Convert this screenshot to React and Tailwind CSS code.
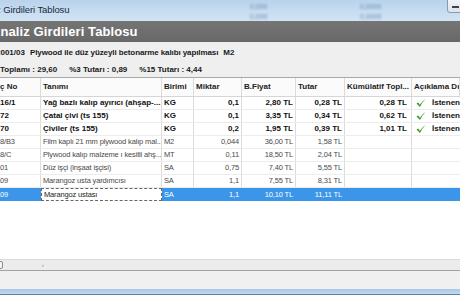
import React from 'react'

const cols = ['w-[41px]', 'w-[121px]', 'w-[32px]', 'w-[48px]', 'w-[54px]', 'w-[49px]', 'w-[67px]', 'flex-1']

const rows = [
  { no: '16/1', name: 'Yağ bazlı kalıp ayırıcı (ahşap-...', unit: 'KG', qty: '0,1', price: '2,80 TL', total: '0,28 TL', cum: '0,28 TL', bold: true, ok: true },
  { no: '72', name: 'Çatal çivi (ts 155)', unit: 'KG', qty: '0,1', price: '3,35 TL', total: '0,34 TL', cum: '0,62 TL', bold: true, ok: true },
  { no: '70', name: 'Çiviler (ts 155)', unit: 'KG', qty: '0,2', price: '1,95 TL', total: '0,39 TL', cum: '1,01 TL', bold: true, ok: true },
  { no: '8/B3', name: 'Film kaplı 21 mm plywood kalıp mal...', unit: 'M2', qty: '0,044', price: '36,00 TL', total: '1,58 TL' },
  { no: '8/C', name: 'Plywood kalıp malzeme ı kesitli ahş...', unit: 'MT', qty: '0,11', price: '18,50 TL', total: '2,04 TL' },
  { no: '01', name: 'Düz işçi (inşaat işçisi)', unit: 'SA', qty: '0,75', price: '7,40 TL', total: '5,55 TL' },
  { no: '09', name: 'Marangoz usta yardımcısı', unit: 'SA', qty: '1,1', price: '7,55 TL', total: '8,31 TL' },
  { no: '09', name: 'Marangoz ustası', unit: 'SA', qty: '1,1', price: '10,10 TL', total: '11,11 TL', selected: true },
]

function Check() {
  return (
    <svg width="11" height="10" viewBox="0 0 11 10">
      <path d="M0.5 5.5 L2.5 4.5 L4.2 7 Q7 2.5 10.5 0.5 Q6.8 4 4.4 9.5 Z" fill="#3f9b2c" />
    </svg>
  )
}

export default function App() {
  return (
    <div className="w-[460px] h-[295px] overflow-hidden bg-white flex flex-col font-['Liberation_Sans',Arial,sans-serif]">
      {/* title bar */}
      <div className="relative h-[21px] bg-gradient-to-b from-[#b9d3ec] to-[#d2e4f4] flex items-center overflow-hidden">
        <span className="ml-[-4px] text-[9.5px] text-[#1b2a3a] tracking-[-0.1px] whitespace-nowrap">z Girdileri Tablosu</span>
        <div className="absolute left-[250px] top-[2px] text-[7px] text-[#6f90b5] blur-[1px] leading-[10px]">
          <div>0,000</div>
          <div>0,000</div>
        </div>
        <div className="absolute left-[360px] top-[2px] text-[7px] text-[#6f90b5] blur-[1px] leading-[10px]">
          <div>0,0000</div>
          <div>0,0000</div>
        </div>
        <div className="absolute left-[447px] top-[-3px] w-[20px] h-[16px] rounded-[3px] border border-[#8a9aab] bg-gradient-to-b from-[#f4f7fa] to-[#dbe3ec] flex items-center pl-[4px]">
          <div className="w-[7px] h-[2px] bg-[#444] mt-[3px]" />
        </div>
      </div>

      {/* heading band */}
      <div className="h-[21px] bg-gradient-to-b from-[#757575] to-[#686868] flex items-center overflow-hidden">
        <span className="ml-[-9px] text-white font-bold text-[13px] tracking-[0.1px] whitespace-nowrap">Analiz Girdileri Tablosu</span>
      </div>

      {/* info */}
      <div className="h-[36px] bg-[#efefef] border-b border-[#a9a9a9] flex flex-col text-[8px] font-bold text-[#1a1a1a] whitespace-nowrap">
        <div className="mt-[5px] h-[12px] flex items-center ml-[-4px] gap-[5px]">
          <span>2001/03</span>
          <span className="tracking-[-0.1px]">Plywood ile düz yüzeyli betonarme kalıbı yapılması</span>
          <span>M2</span>
        </div>
        <div className="mt-[5px] h-[12px] flex items-center gap-[12px]">
          <span>Toplamı : 29,60</span>
          <span>%3 Tutarı : 0,89</span>
          <span>%15 Tutarı : 4,44</span>
        </div>
      </div>

      {/* header */}
      <div className="h-[19px] flex bg-[#fbfbfb] border-b border-[#d6d6d6] text-[8px] font-bold text-[#222] whitespace-nowrap">
        {['ç No', 'Tanımı', 'Birimi', 'Miktar', 'B.Fiyat', 'Tutar', 'Kümülatif Topl...', 'Açıklama Du'].map((h, i) => (
          <div key={i} className={`${cols[i]} shrink-0 border-r border-[#dcdcdc] flex items-center overflow-hidden ${i === 0 ? 'pl-0' : 'pl-[2px]'}`}>
            {h}
          </div>
        ))}
      </div>

      {/* rows */}
      {rows.map((r, idx) => {
        const sel = r.selected
        const txt = sel ? 'text-white text-[7.5px] tracking-[-0.15px]' : r.bold ? 'text-[#111] font-bold text-[8px]' : 'text-[#4a4a4a] text-[7.5px] tracking-[-0.15px]'
        const line = sel ? 'border-[#3b95e8]' : 'border-[#dcdcdc]'
        return (
          <div key={idx} className={`h-[13px] flex whitespace-nowrap ${sel ? 'bg-[#3b95e8]' : 'border-b border-[#ececec]'} ${txt}`}>
            <div className={`${cols[0]} shrink-0 border-r ${line} flex items-center overflow-hidden`}>{r.no}</div>
            <div className={`${cols[1]} shrink-0 flex items-center pl-[2px] overflow-hidden ${sel ? 'bg-white text-[#222] border border-dashed border-[#666]' : 'border-r border-[#dcdcdc]'}`}>{r.name}</div>
            <div className={`${cols[2]} shrink-0 border-r ${line} flex items-center pl-[2px]`}>{r.unit}</div>
            <div className={`${cols[3]} shrink-0 border-r ${line} flex items-center justify-end pr-[2px]`}>{r.qty}</div>
            <div className={`${cols[4]} shrink-0 border-r ${line} flex items-center justify-end pr-[2px]`}>{r.price}</div>
            <div className={`${cols[5]} shrink-0 border-r ${line} flex items-center justify-end pr-[2px]`}>{r.total}</div>
            <div className={`${cols[6]} shrink-0 border-r ${line} flex items-center justify-end pr-[4px]`}>{r.cum || ''}</div>
            <div className="flex-1 flex items-center pl-[4px] gap-[5px] overflow-hidden">
              {r.ok && <Check />}
              {r.ok && <span className="ml-[1px]">İstenen</span>}
            </div>
          </div>
        )
      })}

      <div className="flex-1 bg-white" />

      {/* scrollbar */}
      <div className="h-[11px] bg-[#ececec] border-t border-[#dadada] relative">
        <div className="absolute left-[-4px] top-[1px] w-[7px] h-[8px] rounded-[2px] border border-[#8a8a8a] bg-[#f6f6f6]" />
        <div className="absolute left-[42px] top-[3px] text-[5px] leading-none text-[#666]">‹</div>
      </div>

      <div className="h-[19px] bg-[#f0f0f0] border-t border-[#a3a3a3]" />
      <div className="h-[6px] bg-gradient-to-b from-[#a9c7e6] to-[#c3d9ef] border-b border-[#5f7f9f]" />
    </div>
  )
}
